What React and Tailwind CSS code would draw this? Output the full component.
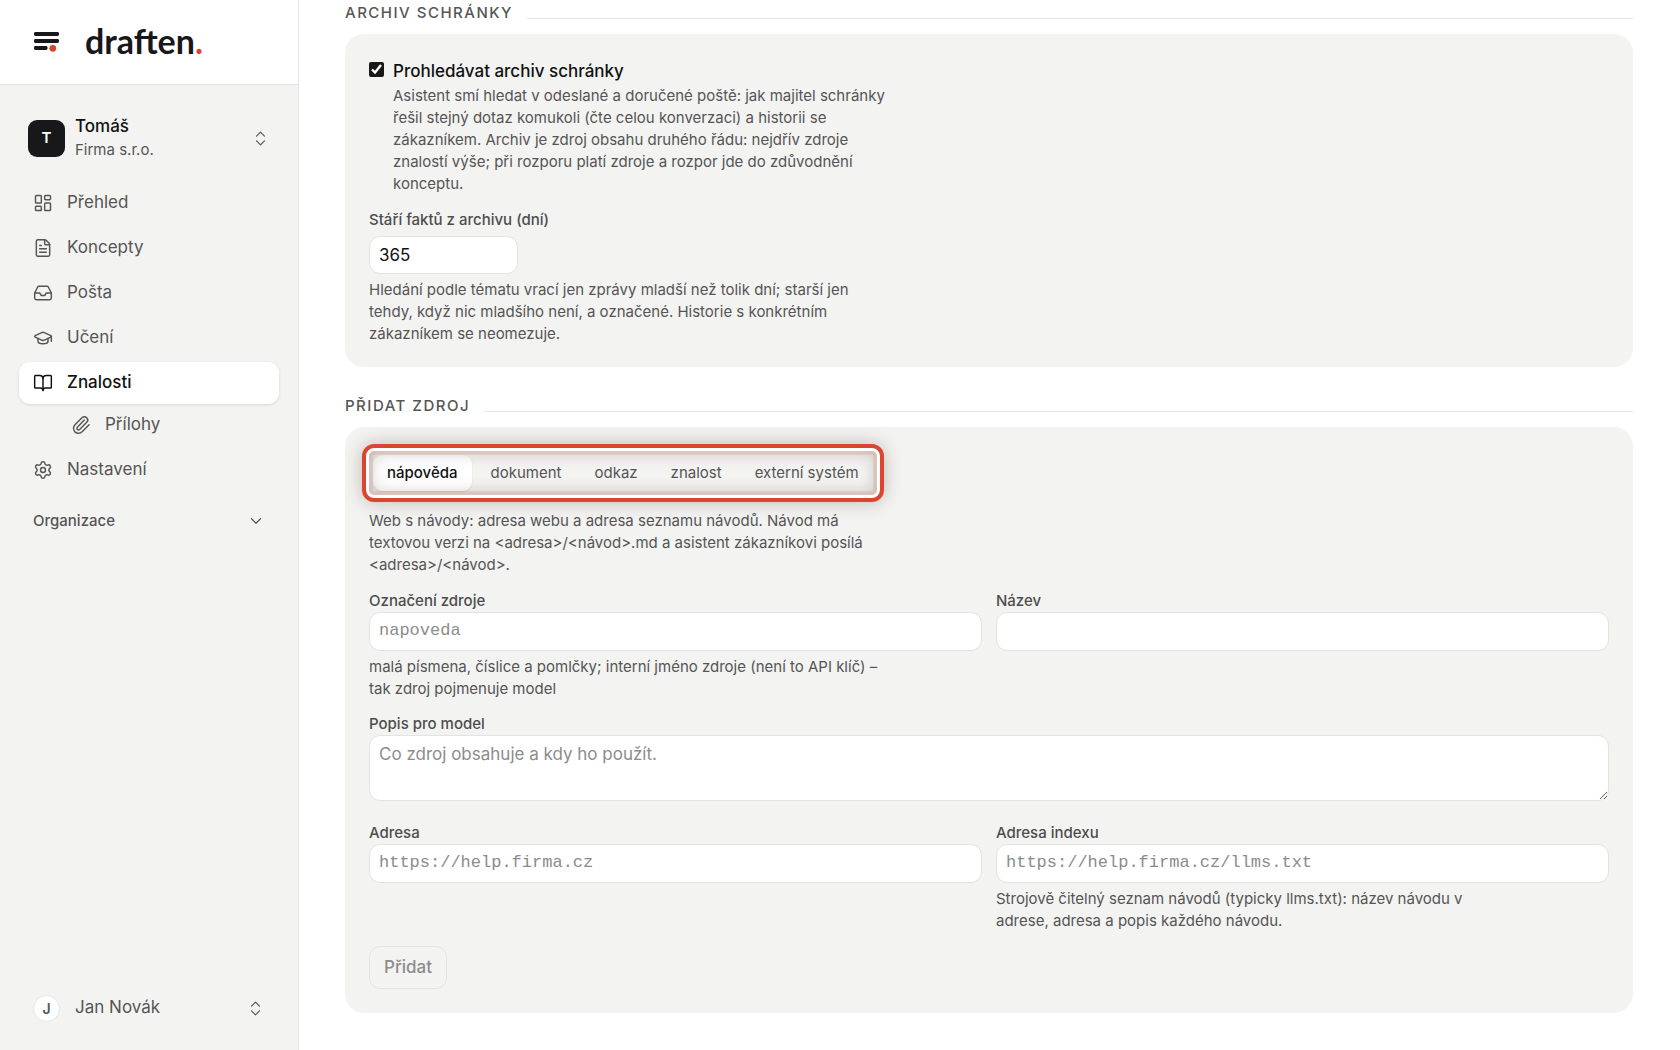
import React, { useState } from "react";
import {
  LayoutDashboard,
  FileText,
  Inbox,
  GraduationCap,
  BookOpen,
  Paperclip,
  Settings,
  ChevronDown,
  ChevronsUpDown,
} from "lucide-react";

const fieldClass =
  "w-full rounded-[11px] border border-[#e3e3e1] bg-white px-[9px] text-[17px] text-[#111113] placeholder:text-[#8c8c8c] focus:outline-none";

function Wordmark() {
  return (
    <a href="#" className="flex items-center gap-[25px]" aria-label="draften">
      <svg width="26" height="20" viewBox="0 0 26 20" aria-hidden="true">
        <rect x="0" y="0" width="25" height="4" rx="1.4" fill="#18181b" />
        <rect x="0" y="7" width="25" height="4" rx="1.4" fill="#18181b" />
        <rect x="0" y="14" width="13.5" height="4" rx="1.4" fill="#18181b" />
        <circle cx="18.8" cy="16.3" r="3.4" fill="#dc4430" />
      </svg>
      <span className="pb-[2px] font-['Lato',sans-serif] text-[34px] leading-[40px] font-bold text-[#18181b]">
        draften<span className="text-[#dc4430]">.</span>
      </span>
    </a>
  );
}

function NavItem({ icon: Icon, label, active }) {
  return (
    <a
      href="#"
      aria-current={active ? "page" : undefined}
      className={
        active
          ? "flex h-[42px] items-center gap-[14px] rounded-[11px] bg-white pl-[14px] text-[17px] font-medium text-[#111113] shadow-[0_1px_3px_rgba(0,0,0,0.12)]"
          : "flex h-[42px] items-center gap-[14px] rounded-[11px] pl-[14px] text-[17px] text-[#555555]"
      }
    >
      <Icon size={20} strokeWidth={1.75} />
      {label}
    </a>
  );
}

function Sidebar() {
  return (
    <aside className="flex w-[299px] shrink-0 flex-col border-r border-[#e5e5e3] bg-[#f3f3f1]">
      <header className="flex h-[85px] items-center border-b border-[#e3e3e1] bg-white pl-[34px]">
        <Wordmark />
      </header>
      <button type="button" className="mx-[19px] mt-[26px] flex h-[54px] items-center px-[9px] text-left">
        <span className="flex size-[37px] items-center justify-center rounded-[9px] bg-[#18181b] text-[15px] font-semibold text-white">
          T
        </span>
        <span className="ml-[10px] flex flex-1 flex-col">
          <span className="text-[17px] leading-[24px] font-medium text-[#111113]">Tomáš</span>
          <span className="text-[15px] leading-[24px] text-[#555555]">Firma s.r.o.</span>
        </span>
        <ChevronsUpDown size={19} strokeWidth={1.5} className="text-[#555555]" />
      </button>
      <nav className="mx-[19px] mt-[17px] flex flex-col gap-[3px]">
        <NavItem icon={LayoutDashboard} label="Přehled" />
        <NavItem icon={FileText} label="Koncepty" />
        <NavItem icon={Inbox} label="Pošta" />
        <NavItem icon={GraduationCap} label="Učení" />
        <div>
          <NavItem icon={BookOpen} label="Znalosti" active />
          <div className="pl-[38px]">
            <NavItem icon={Paperclip} label="Přílohy" />
          </div>
        </div>
        <NavItem icon={Settings} label="Nastavení" />
      </nav>
      <button type="button" className="mx-[19px] mt-[16px] flex h-[28px] items-center justify-between px-[14px] text-[15px] font-medium text-[#555555]">
        Organizace
        <ChevronDown size={18} strokeWidth={1.6} />
      </button>
      <button type="button" className="mx-[19px] mt-auto mb-[21px] flex h-[42px] items-center px-[14px] text-[17px] text-[#555555]">
        <span className="flex size-[27px] items-center justify-center rounded-full border border-[#e5e5e3] bg-white text-[14px] font-semibold">
          J
        </span>
        <span className="ml-[15px] flex-1 text-left">Jan Novák</span>
        <ChevronsUpDown size={19} strokeWidth={1.5} />
      </button>
    </aside>
  );
}

function SectionTitle({ children }) {
  return (
    <h2 className="flex items-center gap-[14px] text-[15px] leading-[20px] font-medium tracking-widest text-[#555555] uppercase">
      {children}
      <span className="mt-[10px] h-px flex-1 bg-[#e5e5e3]" />
    </h2>
  );
}

function Help({ id, children }) {
  return (
    <p id={id} className="max-w-[512px] text-[15px] leading-[22px] text-[#555555]">
      {children}
    </p>
  );
}

function Field({ id, label, placeholder, mono, help }) {
  return (
    <div>
      <label htmlFor={id} className="block text-[15px] leading-[22px] font-medium text-[#4d4d4d]">
        {label}
      </label>
      <input
        id={id}
        type="text"
        placeholder={placeholder}
        className={
          mono
            ? fieldClass + " h-[39px] pb-[3px] font-['Liberation_Mono',monospace]"
            : fieldClass + " h-[39px]"
        }
      />
      {help && (
        <div className="mt-[5px]">
          <Help>{help}</Help>
        </div>
      )}
    </div>
  );
}

const tabs = ["nápověda", "dokument", "odkaz", "znalost", "externí systém"];

function SourceTabs() {
  const [selected, setSelected] = useState(tabs[0]);
  return (
    <div className="relative w-fit">
      <div role="tablist" className="flex gap-[5px] rounded-[11px] p-[4px]">
        {tabs.map((tab) => (
          <button
            key={tab}
            type="button"
            role="tab"
            aria-selected={tab === selected}
            onClick={() => setSelected(tab)}
            className={
              tab === selected
                ? "h-[36px] rounded-[9px] bg-white px-[14px] text-[15px] font-medium text-[#111113] shadow-[0_1px_2px_rgba(0,0,0,0.1)]"
                : "h-[36px] rounded-[9px] px-[14px] text-[15px] text-[#555555]"
            }
          >
            {tab}
          </button>
        ))}
      </div>
      <div className="pointer-events-none absolute -inset-[7px] rounded-[12px] border-4 border-[#dc4430] shadow-[0_0_18px_rgba(60,40,30,0.28),inset_0_0_0_3px_#ffffff,inset_0_0_0_7px_rgba(210,110,90,0.18),inset_0_0_14px_7px_rgba(90,65,60,0.22)]" />
    </div>
  );
}

export default function App() {
  return (
    <div className="flex min-h-screen bg-white font-['Inter',sans-serif]">
      <Sidebar />
      <main className="min-w-0 flex-1 pt-[3px] pr-[47px] pb-[37px] pl-[46px]">
        <SectionTitle>Archiv schránky</SectionTitle>
        <section className="mt-[11px] rounded-[19px] bg-[#f3f3f1] px-[24px] pt-[24px] pb-[22px]">
          <div className="flex items-start gap-[9px]">
            <input
              id="archive"
              type="checkbox"
              defaultChecked
              aria-describedby="archive-help"
              className="mt-[4px] size-[15px] accent-[#18181b]"
            />
            <div>
              <label htmlFor="archive" className="mb-px block text-[17px] leading-[26px] font-medium text-[#111113]">
                Prohledávat archiv schránky
              </label>
              <Help id="archive-help">
                Asistent smí hledat v odeslané a doručené poště: jak majitel schránky řešil stejný
                dotaz komukoli (čte celou konverzaci) a historii se zákazníkem. Archiv je zdroj
                obsahu druhého řádu: nejdřív zdroje znalostí výše; při rozporu platí zdroje a rozpor
                jde do zdůvodnění konceptu.
              </Help>
            </div>
          </div>
          <label htmlFor="age" className="mt-[14px] block text-[15px] leading-[22px] font-medium text-[#4d4d4d]">
            Stáří faktů z archivu (dní)
          </label>
          <div className="mt-[5px] mb-[5px] w-[149px]">
            <input id="age" type="text" inputMode="numeric" defaultValue="365" className={fieldClass + " h-[38px]"} />
          </div>
          <Help>
            Hledání podle tématu vrací jen zprávy mladší než tolik dní; starší jen tehdy, když nic
            mladšího není, a označené. Historie s konkrétním zákazníkem se neomezuje.
          </Help>
        </section>

        <div className="mt-[29px]">
          <SectionTitle>Přidat zdroj</SectionTitle>
        </div>
        <section className="mt-[11px] rounded-[19px] bg-[#f3f3f1] p-[24px]">
          <SourceTabs />
          <div className="mt-[15px]">
            <Help>
              Web s návody: adresa webu a adresa seznamu návodů. Návod má textovou verzi na
              &lt;adresa&gt;/&lt;návod&gt;.md a asistent zákazníkovi posílá &lt;adresa&gt;/&lt;návod&gt;.
            </Help>
          </div>
          <div className="mt-[14px] grid grid-cols-2 gap-[14px]">
            <Field
              id="source-key"
              label="Označení zdroje"
              placeholder="napoveda"
              mono
              help="malá písmena, číslice a pomlčky; interní jméno zdroje (není to API klíč) – tak zdroj pojmenuje model"
            />
            <Field id="source-name" label="Název" />
          </div>
          <div className="mt-[13px]">
            <label htmlFor="description" className="block text-[15px] leading-[22px] font-medium text-[#4d4d4d]">
              Popis pro model
            </label>
            <textarea
              id="description"
              placeholder="Co zdroj obsahuje a kdy ho použít."
              className={fieldClass + " block h-[66px] resize-y py-[6px] leading-[25px]"}
            />
          </div>
          <div className="mt-[21px] grid grid-cols-2 gap-[14px]">
            <Field id="address" label="Adresa" placeholder="https://help.firma.cz" mono />
            <Field
              id="index-address"
              label="Adresa indexu"
              placeholder="https://help.firma.cz/llms.txt"
              mono
              help="Strojově čitelný seznam návodů (typicky llms.txt): název návodu v adrese, adresa a popis každého návodu."
            />
          </div>
          <button
            type="button"
            disabled
            className="mt-[14px] block h-[43px] rounded-[11px] border border-[#e3e3e1] px-[14px] text-[17px] font-medium text-[#8c8c8c]"
          >
            Přidat
          </button>
        </section>
      </main>
    </div>
  );
}
